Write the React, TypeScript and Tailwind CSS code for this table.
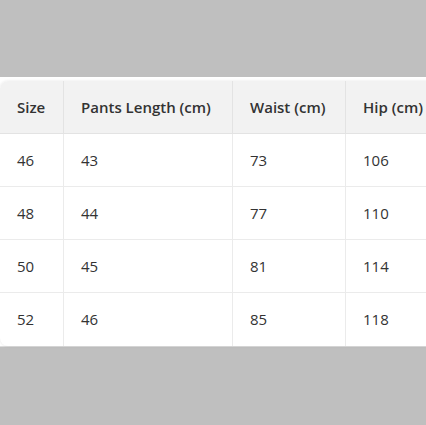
const headers = ['Size', 'Pants Length (cm)', 'Waist (cm)', 'Hip (cm)'];

const rows = [
  ['46', '43', '73', '106'],
  ['48', '44', '77', '110'],
  ['50', '45', '81', '114'],
  ['52', '46', '85', '118'],
];

const widths = ['w-[63px]', 'w-[169px]', 'w-[113px]', 'w-[100px]'];

export default function App() {
  return (
    <div className="h-[425px] w-[426px] overflow-hidden bg-[#bfbfbf] font-['Open_Sans',sans-serif] text-[15px] text-[#333]">
      <div className="mt-[77px] bg-white pt-1 border-b border-[#dcdcdc]">
        <div className="w-[445px] overflow-hidden rounded-l-lg shadow-[0_0_3px_rgba(0,0,0,0.1)]">
          <table className="w-[445px] table-fixed border-separate border-spacing-0">
            <thead>
              <tr className="bg-[#f2f2f2] h-[53px]">
                {headers.map((h, i) => (
                  <th
                    key={h}
                    className={`${widths[i]} text-left font-semibold px-[17px] whitespace-nowrap border-b border-[#e3e3e3] ${i > 0 ? 'border-l' : ''}`}
                  >
                    {h}
                  </th>
                ))}
              </tr>
            </thead>
            <tbody>
              {rows.map((row, r) => (
                <tr key={row[0]} className="h-[53px]">
                  {row.map((cell, i) => (
                    <td
                      key={i}
                      className={`px-[17px] border-[#ebebeb] ${r < rows.length - 1 ? 'border-b' : ''} ${i > 0 ? 'border-l' : ''}`}
                    >
                      {cell}
                    </td>
                  ))}
                </tr>
              ))}
            </tbody>
          </table>
        </div>
      </div>
    </div>
  );
}
